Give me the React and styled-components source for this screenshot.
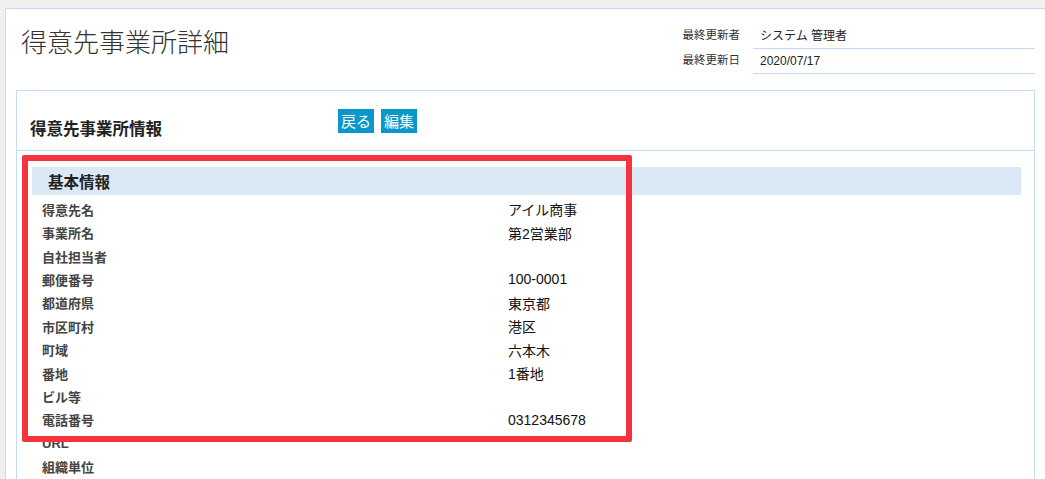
import React from 'react';
import styled, { createGlobalStyle } from 'styled-components';

const GlobalStyle = createGlobalStyle`
    html, body {
        margin: 0;
        padding: 0;
        background: #f0f0ec;
        font-family: "Liberation Sans", "Noto Sans CJK JP", sans-serif;
        color: #333;
        overflow: hidden;
    }
`;

const Page = styled.div`
    position: relative;
    height: 479px;
    overflow: hidden;
`;

const Main = styled.div`
    margin: 8px 0 0 5px;
    border-top: 1px solid #c6dcf4;
    border-left: 1px solid #c6dcf4;
    background: #fff;
    padding: 0 10px 40px;
    min-height: 500px;
`;

const TopBar = styled.div`
    display: flex;
    justify-content: space-between;
    align-items: flex-start;
    padding-top: 15px;
    margin-bottom: 16px;
`;

const PageTitle = styled.h1`
    margin: 1px 0 0 5px;
    font-family: "Noto Sans CJK JP", sans-serif;
    font-weight: 300;
    font-size: 26px;
    line-height: 31px;
    color: #333;
`;

const Meta = styled.div`
    display: grid;
    grid-template-columns: auto 282px;
    grid-auto-rows: 25px;
    column-gap: 13px;
`;

const MetaLabel = styled.div`
    font-family: "Noto Sans CJK JP", sans-serif;
    font-size: 11.5px;
    line-height: 16px;
    padding-top: 2px;
    color: #333;
`;

const MetaValue = styled.div`
    border-bottom: 1px solid #c6dcf4;
    padding: 4px 0 0 7px;
    font-size: 12px;
    line-height: 16px;
    color: #222;
`;

const Panel = styled.section`
    border: 1px solid #c6dcf4;
    padding-bottom: 30px;
`;

const PanelHeader = styled.div`
    display: flex;
    align-items: flex-start;
    box-sizing: border-box;
    height: 60px;
    padding: 18px 0 0 13px;
    border-bottom: 1px solid #c6dcf4;
`;

const PanelTitle = styled.h2`
    width: 308px;
    margin: 7px 0 0;
    font-family: "Noto Sans CJK JP", sans-serif;
    font-size: 16.5px;
    line-height: 24px;
    font-weight: 700;
    color: #222;
`;

const Buttons = styled.div`
    display: flex;
    gap: 7px;
`;

const Button = styled.button`
    height: 24px;
    padding: 0 3px;
    border: none;
    background: #0a98cb;
    color: #fff;
    font-family: "Noto Sans CJK JP", sans-serif;
    font-size: 15px;
    line-height: 24px;
    cursor: pointer;
`;

const PanelBody = styled.div`
    padding: 16px 13px 0 15px;
`;

const SectionBar = styled.div`
    height: 28px;
    padding-left: 16px;
    margin-bottom: 2.6px;
    background: #dbe9f7;
    font-family: "Noto Sans CJK JP", sans-serif;
    font-weight: 700;
    font-size: 15.5px;
    line-height: 28px;
    color: #222;
`;

const Row = styled.div`
    display: grid;
    grid-template-columns: 466px 1fr;
    height: 23.4px;
    align-items: center;
    padding-left: 10px;
`;

const Label = styled.div`
    font-size: 13px;
    font-weight: 700;
    color: #444;
`;

const Value = styled.div`
    font-size: 14px;
    color: #111;
`;

const Highlight = styled.div`
    position: absolute;
    left: 22px;
    top: 155px;
    width: 598px;
    height: 275px;
    border: 6px solid #f4333f;
    border-radius: 2px;
    pointer-events: none;
`;

const rows = [
    ['得意先名', 'アイル商事'],
    ['事業所名', '第2営業部'],
    ['自社担当者', ''],
    ['郵便番号', '100-0001'],
    ['都道府県', '東京都'],
    ['市区町村', '港区'],
    ['町域', '六本木'],
    ['番地', '1番地'],
    ['ビル等', ''],
    ['電話番号', '0312345678'],
    ['URL', ''],
    ['組織単位', ''],
];

const App = () => {
    return (
        <Page>
            <GlobalStyle />
            <Main>
                <TopBar>
                    <PageTitle>得意先事業所詳細</PageTitle>
                    <Meta>
                        <MetaLabel>最終更新者</MetaLabel>
                        <MetaValue>システム 管理者</MetaValue>
                        <MetaLabel>最終更新日</MetaLabel>
                        <MetaValue>2020/07/17</MetaValue>
                    </Meta>
                </TopBar>
                <Panel>
                    <PanelHeader>
                        <PanelTitle>得意先事業所情報</PanelTitle>
                        <Buttons>
                            <Button>戻る</Button>
                            <Button>編集</Button>
                        </Buttons>
                    </PanelHeader>
                    <PanelBody>
                        <SectionBar>基本情報</SectionBar>
                        {rows.map(([label, value]) => (
                            <Row key={label}>
                                <Label>{label}</Label>
                                <Value>{value}</Value>
                            </Row>
                        ))}
                    </PanelBody>
                </Panel>
            </Main>
            <Highlight />
        </Page>
    );
};

export default App;
